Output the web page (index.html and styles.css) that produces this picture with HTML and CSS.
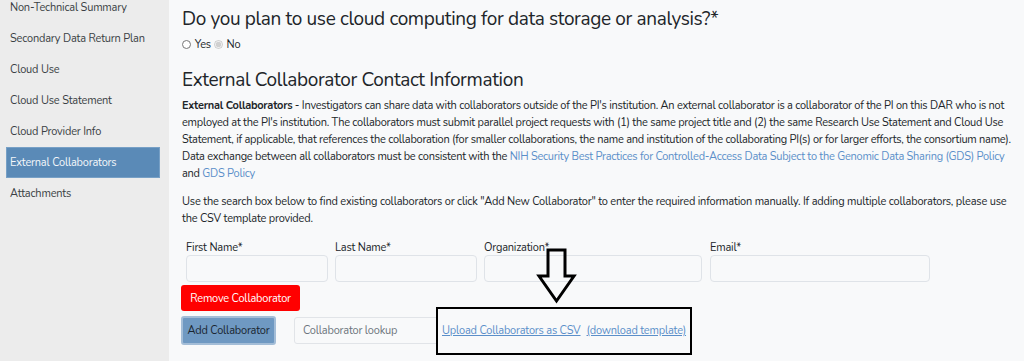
FILE: index.html
```html
<!DOCTYPE html>
<html>
  <head>
    <meta charset="utf-8" />
    <title>Data Access Request</title>
    <meta name="viewport" content="width=device-width, initial-scale=1" />
    <link rel="stylesheet" href="styles.css">
  </head>

  <body>
    <aside class="sidebar">
      <ul class="nav">
        <li><a href="#">Non-Technical Summary</a></li>
        <li><a href="#">Secondary Data Return Plan</a></li>
        <li><a href="#">Cloud Use</a></li>
        <li><a href="#">Cloud Use Statement</a></li>
        <li><a href="#">Cloud Provider Info</a></li>
        <li class="active"><a href="#">External Collaborators</a></li>
        <li><a href="#">Attachments</a></li>
      </ul>
    </aside>

    <main class="content">
      <h2 class="question">Do you plan to use cloud computing for data storage or analysis?*</h2>
      <div class="radios">
        <label><input type="radio" name="cloud" /> Yes</label>
        <label><input type="radio" name="cloud" checked disabled /> No</label>
      </div>

      <h2 class="section-title">External Collaborator Contact Information</h2>
      <p>
        <strong>External Collaborators</strong> - Investigators can share data with collaborators outside of the PI's institution. An external collaborator is a collaborator of the PI on this DAR who is not employed at the PI's institution. The collaborators must submit parallel project requests with (1) the same project title and (2) the same Research Use Statement and Cloud Use Statement, if applicable, that references the collaboration (for smaller collaborations, the name and institution of the collaborating PI(s) or for larger efforts, the consortium name). Data exchange between all collaborators must be consistent with the <a href="#">NIH Security Best Practices for Controlled-Access Data Subject to the Genomic Data Sharing (GDS) Policy</a> and <a href="#">GDS Policy</a>
      </p>
      <p>
        Use the search box below to find existing collaborators or click "Add New Collaborator" to enter the required information manually. If adding multiple collaborators, please use the CSV template provided.
      </p>

      <div class="collab-row">
        <div class="field w-sm">
          <label>First Name*</label>
          <input type="text" />
        </div>
        <div class="field w-sm">
          <label>Last Name*</label>
          <input type="text" />
        </div>
        <div class="field w-md">
          <label>Organization*</label>
          <input type="text" />
        </div>
        <div class="field w-lg">
          <label>Email*</label>
          <input type="text" />
        </div>
      </div>

      <button class="btn btn-danger" type="button">Remove Collaborator</button>

      <div class="add-row">
        <button class="btn btn-primary" type="button">Add Collaborator</button>
        <input class="lookup" type="text" placeholder="Collaborator lookup" />
        <div class="csv-box">
          <a href="#">Upload Collaborators as CSV</a>
          <a href="#">(download template)</a>
        </div>
      </div>

      <!-- annotation arrow pointing at the csv links -->
      <svg class="arrow" width="44" height="58" viewBox="0 0 44 58">
        <polygon points="12,2 29,2 29,28 38,28 20.5,53 3,28 12,28" fill="none" stroke="#000" stroke-width="3" stroke-linejoin="miter" />
      </svg>
    </main>
  </body>
</html>
```

FILE: styles.css
```css
* {
    box-sizing: border-box;
}

body {
    margin: 0;
    height: 361px;
    overflow: hidden;
    display: flex;

    font-family: 'Nunito', 'Lato', sans-serif;
    font-size: 11px;
    letter-spacing: -0.2px;
    color: #212529;
    background-color: #f8f9fa;
}

a {
    color: #5b8fc9;
    text-decoration: none;
}

.sidebar {
    width: 169px;
    flex-shrink: 0;
    background-color: #ececec;
}

.nav {
    list-style: none;
    margin: -8px 0 0 0;
    padding: 0 9px 0 6px;
}

.nav li {
    height: 31px;
    display: flex;
    align-items: center;
    white-space: nowrap;
}

.nav a {
    padding-left: 4px;
    font-size: 11px;
    color: #3a3f44;
}

.nav li.active {
    background-color: #5a8ab7;
    border: 1px solid #77a0c6;
}

.nav li.active a {
    padding-left: 3px;
    color: #f4f7fa;
}

.content {
    position: relative;
    flex: 1;
    padding: 6px 0 0 13px;
}

h2 {
    margin: 0;
    font-weight: 400;
    font-size: 19px;
    letter-spacing: -0.35px;
    line-height: 26px;
}

.radios {
    margin: 5px 0 0 0;
    font-size: 11px;
    display: flex;
    gap: 3px;
    align-items: center;
}

.radios input {
    margin: 0 1px 0 0;
    width: 9px;
    height: 9px;
    vertical-align: -1px;
}

.section-title {
    margin-top: 15px;
}

p {
    margin: 4px 0 0 0;
    line-height: 17px;
    letter-spacing: -0.25px;
}

p + p {
    margin-top: 11px;
    letter-spacing: -0.2px;
}

.collab-row {
    display: flex;
    gap: 7px;
    margin: 14px 0 0 4px;
}

.field label {
    display: block;
    line-height: 14px;
    margin-bottom: 0;
}

.field input {
    width: 100%;
    height: 27px;
    border: 1px solid #dfe3e8;
    border-radius: 4px;
    background-color: #f8f9fa;
}

.w-sm {
    width: 142px;
}

.w-md {
    width: 218px;
    margin-right: 1px;
}

.w-lg {
    width: 220px;
}

.btn {
    font-family: inherit;
    font-size: 11px;
    letter-spacing: -0.2px;
    border-radius: 3px;
    cursor: pointer;
    white-space: nowrap;
}

.btn-danger {
    margin: 3px 0 0 -1px;
    width: 119px;
    height: 26px;
    padding: 0;
    border: none;
    color: #fff;
    background-color: #ff0000;
}

.add-row {
    display: flex;
    align-items: center;
    margin: 5px 0 0 -1px;
}

.btn-primary {
    width: 95px;
    height: 29px;
    padding: 0;
    color: #1a2530;
    background-color: #6f99c2;
    border: 2px solid #a3bdd7;
}

.lookup {
    margin-left: 18px;
    width: 143px;
    height: 27px;
    padding: 0 8px;
    font-family: inherit;
    font-size: 11px;
    letter-spacing: -0.2px;
    border: 1px solid #e1e4e8;
    border-radius: 3px 0 0 3px;
    background-color: #f8f9fa;
}

.lookup::placeholder {
    color: #6c757d;
}

.csv-box {
    margin: -10px 0 -10px -1px;
    width: 256px;
    height: 48px;
    padding-left: 4px;
    display: flex;
    align-items: center;
    gap: 6px;
    white-space: nowrap;
    border: 2px solid #000;
    background-color: #f8f9fa;
}

.csv-box a {
    text-decoration: underline;
}

.arrow {
    position: absolute;
    left: 367px;
    top: 248px;
}
```
